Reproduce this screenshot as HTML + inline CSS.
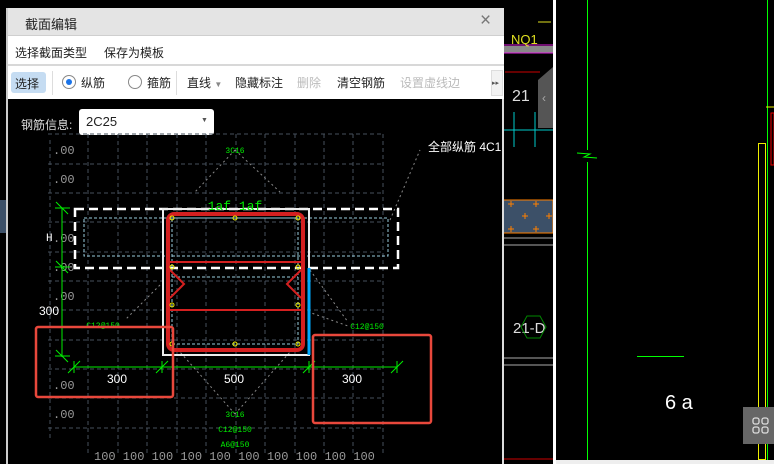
<!DOCTYPE html>
<html><head><meta charset="utf-8"><style>
*{margin:0;padding:0;box-sizing:border-box}
body{width:774px;height:464px;background:#000;position:relative;overflow:hidden;font-family:"Liberation Sans","Noto Sans CJK SC",sans-serif}
.abs{position:absolute}
.t{font-size:12px;color:#222;white-space:nowrap}
</style></head><body>
<svg class="abs" style="left:0;top:0" width="774" height="464" viewBox="0 0 774 464">
 <rect x="0" y="0" width="774" height="464" fill="#000"/>
 <line x1="503" y1="45" x2="553" y2="45" stroke="#e020e0"/>
 <rect x="503" y="46" width="50" height="7" fill="#888"/>
 <line x1="503" y1="53" x2="553" y2="53" stroke="#e020e0"/>
 <text x="511" y="44" fill="#e0e020" font-size="13" font-family="Liberation Sans">NQ1</text>
 <line x1="538" y1="22" x2="551" y2="22" stroke="#e0e020"/>
 <line x1="505" y1="72" x2="540" y2="72" stroke="#c00"/>
 <rect x="503" y="200" width="50" height="33" fill="#3c5068" stroke="#ff8000"/>
 <g stroke="#ff8000"><path d="M508 204h6M511 201v6M533 204h6M536 201v6M522 216h6M525 213v6M546 216h6M549 213v6M508 229h6M511 226v6M533 229h6M536 226v6"/></g>
 <line x1="503" y1="238" x2="553" y2="238" stroke="#aaa"/>
 <line x1="503" y1="245" x2="553" y2="245" stroke="#aaa"/>
 <line x1="503" y1="130" x2="553" y2="130" stroke="#0cc"/>
 <line x1="514" y1="112" x2="514" y2="147" stroke="#0cc"/>
 <line x1="535" y1="112" x2="535" y2="147" stroke="#0cc"/>
 <text x="512" y="101" fill="#ddd" font-size="16">21</text>
 <text x="513" y="333" fill="#ddd" font-size="15">21-D</text>
 <polygon points="527,316 540,316 546,327 540,338 527,338 521,327" fill="none" stroke="#080"/>
 <line x1="503" y1="358" x2="553" y2="358" stroke="#aaa"/>
 <line x1="503" y1="365" x2="553" y2="365" stroke="#aaa"/>
 <line x1="503" y1="459" x2="553" y2="459" stroke="#c00"/>
 <path d="M538 80 L553 67 L553 128 L538 128 Z" fill="#555"/>
 <text x="542" y="102" fill="#aaa" font-size="12">‹</text>
 <rect x="553" y="0" width="3" height="464" fill="#fff"/>
 <line x1="587.5" y1="0" x2="587.5" y2="150" stroke="#0f0"/>
 <line x1="587.5" y1="162" x2="587.5" y2="460" stroke="#0f0"/>
 <path d="M577 153 L590 154 L584 157 L597 158" stroke="#0f0" fill="none"/>
 <line x1="767.5" y1="0" x2="767.5" y2="460" stroke="#0f0"/>
 <rect x="758.5" y="143.5" width="7" height="316" fill="none" stroke="#ee0"/>
 <line x1="766" y1="107" x2="774" y2="107" stroke="#ee0"/>
 <rect x="771" y="113" width="3" height="52" fill="none" stroke="#e00"/>
 <line x1="637" y1="356.5" x2="684" y2="356.5" stroke="#0f0"/>
 <text x="665" y="409" fill="#fff" font-size="20" font-family="Liberation Sans" font-weight="100">6 a</text>
 <rect x="743" y="407" width="31" height="37" fill="#666"/>
 <g fill="none" stroke="#ddd" stroke-width="1.3"><rect x="753" y="418" width="6" height="6" rx="2"/><rect x="762" y="418" width="6" height="6" rx="2"/><rect x="753" y="427" width="6" height="6" rx="2"/><rect x="762" y="427" width="6" height="6" rx="2"/></g>
 <rect x="556" y="460" width="218" height="4" fill="#eee"/>
 <rect x="0" y="200" width="6" height="33" fill="#3c5068"/>
</svg>

<div class="abs" style="left:6px;top:8px;width:498px;height:456px;background:#000;border-left:2px solid #ccc;border-right:2px solid #ddd">
 <div class="abs" style="left:0;top:0;width:496px;height:28px;background:#e4e4e4;border-bottom:1px solid #cfcfcf"><span class="abs t" style="left:17px;top:6px;font-size:13px">截面编辑</span><span class="abs" style="left:472px;top:2px;font-size:19px;color:#777">×</span></div>
 <div class="abs" style="left:0;top:28px;width:496px;height:30px;background:#fff;border-bottom:2px solid #d8d8d8"><span class="abs t" style="left:7px;top:8px">选择截面类型</span><span class="abs t" style="left:96px;top:8px">保存为模板</span></div>
 <div class="abs" style="left:0;top:58px;width:496px;height:33px;background:#fff">
  <span class="abs t" style="left:3px;top:6px;width:35px;height:21px;background:#c5dcf2;border-radius:3px;padding:3px 0 0 4px">选择</span>
  <span class="abs" style="left:44px;top:5px;width:1px;height:24px;background:#ddd"></span>
  <span class="abs" style="left:54px;top:9px;width:14px;height:14px;border:1px solid #888;border-radius:50%"></span>
  <span class="abs" style="left:58px;top:13px;width:6px;height:6px;background:#1a73e8;border-radius:50%"></span>
  <span class="abs t" style="left:73px;top:8px">纵筋</span>
  <span class="abs" style="left:120px;top:9px;width:14px;height:14px;border:1px solid #888;border-radius:50%"></span>
  <span class="abs t" style="left:139px;top:8px">箍筋</span>
  <span class="abs" style="left:168px;top:5px;width:1px;height:24px;background:#ddd"></span>
  <span class="abs t" style="left:179px;top:8px">直线 <span style="font-size:8px;color:#888">▼</span></span>
  <span class="abs t" style="left:227px;top:8px">隐藏标注</span>
  <span class="abs t" style="left:289px;top:8px;color:#bbb">删除</span>
  <span class="abs t" style="left:329px;top:8px">清空钢筋</span>
  <span class="abs t" style="left:392px;top:8px;color:#bbb">设置虚线边</span>
  <span class="abs" style="left:483px;top:4px;width:12px;height:26px;background:#f2f2f2;border:1px solid #ddd;font-size:7px;color:#555;padding-top:8px">▸▸</span>
 </div>
 <span class="abs t" style="left:13px;top:108px;color:#ddd;font-size:12px">钢筋信息:</span>
 <div class="abs" style="left:71px;top:101px;width:135px;height:26px;background:#fff;border-radius:3px"><span class="abs t" style="left:7px;top:5px;font-size:13px">2C25</span><span class="abs" style="left:122px;top:8px;font-size:7px;color:#555">▼</span></div>
</div>

<svg class="abs" style="left:0;top:0;pointer-events:none" width="774" height="464" viewBox="0 0 774 464" font-family="Liberation Mono">
 <g stroke="#46505c" stroke-dasharray="4 3" stroke-width="1">
  <path d="M88 134V454M118 134V454M147 134V454M177 134V454M206 134V454M236 134V454M265 134V454M295 134V454M324 134V454M353 134V454M383 134V454"/>
  <path d="M48 134H383M48 164H383M48 193H383M48 222H383M48 252H383M48 281H383M48 310H383M48 340H383M48 369H383M48 398H383M48 428H383"/>
  <path d="M50 140V440"/>
 </g>
 <g fill="#999" font-size="12">
  <text x="53" y="154">.00</text><text x="53" y="183">.00</text><text x="53" y="242">.00</text><text x="53" y="271">.00</text><text x="53" y="300">.00</text><text x="53" y="389">.00</text><text x="53" y="418">.00</text>
  <text x="94" y="460">100 100 100 100 100 100 100 100 100 100</text>
 </g>
 <g stroke="#888" stroke-dasharray="2 3" fill="none"><path d="M235 150L195 192M235 150L280 192M235 414L180 352M235 414L290 352M310 270L348 322M303 310L348 326M160 285L125 320M390 220L420 150"/></g>
 <rect x="75" y="209" width="323" height="59" fill="none" stroke="#fff" stroke-width="2.5" stroke-dasharray="9 5"/>
 <rect x="84" y="218" width="304" height="38" fill="none" stroke="#9cd" stroke-dasharray="3 2"/>
 <rect x="163" y="209" width="146" height="146" fill="none" stroke="#eee" stroke-width="2"/>
 <rect x="172" y="218" width="126" height="126" fill="none" stroke="#9cd" stroke-dasharray="3 2"/>
 <line x1="172" y1="277" x2="298" y2="277" stroke="#9cd" stroke-dasharray="3 2"/>
 <rect x="168" y="214" width="135" height="136" rx="6" fill="none" stroke="#d42020" stroke-width="4"/>
 <g stroke="#d42020" stroke-width="2" fill="none"><path d="M168 262H303M168 310H303M170 270L184 284L170 298M301 270L287 284L301 298"/></g>
 <line x1="309" y1="268" x2="309" y2="355" stroke="#0af" stroke-width="3"/>
 <g fill="none" stroke="#ee0" stroke-width="1"><circle cx="172" cy="218" r="2"/><circle cx="235" cy="218" r="2"/><circle cx="298" cy="218" r="2"/><circle cx="172" cy="267" r="2"/><circle cx="298" cy="267" r="2"/><circle cx="172" cy="305" r="2"/><circle cx="298" cy="305" r="2"/><circle cx="172" cy="344" r="2"/><circle cx="235" cy="344" r="2"/><circle cx="298" cy="344" r="2"/></g>
 <g stroke="#0e0" fill="none"><path d="M62 208V357M55 208H70M55 267H70M55 356H70M56 202L68 214M56 261L68 273M56 350L68 362M74 367H397M74 361V373M162 361V373M309 361V373M397 361V373M68 373L80 361M156 373L168 361M303 373L315 361M391 373L403 361"/></g>
 <g fill="#0e0" font-size="8" text-anchor="middle"><text x="235" y="153">3C16</text><text x="235" y="417">3C16</text><text x="235" y="432">C12@150</text><text x="235" y="447">A6@150</text><text x="367" y="329">C12@150</text><text x="103" y="328">C12@150</text></g>
 <text x="235" y="210" fill="#0e0" font-size="13" text-anchor="middle">1af  1af</text>
 <g fill="#fff" font-family="Liberation Sans" font-size="12" text-anchor="middle"><text x="117" y="383">300</text><text x="234" y="383">500</text><text x="352" y="383">300</text><text x="49" y="315">300</text></g>
 <text x="46" y="241" fill="#fff" font-size="11">H</text>
 <text x="428" y="151" fill="#fff" font-size="12" font-family="Liberation Sans,Noto Sans CJK SC,sans-serif">全部纵筋  4C1</text>
 <rect x="36" y="327" width="137" height="70" fill="none" stroke="#e8483c" stroke-width="2.5" rx="2"/>
 <rect x="313" y="335" width="118" height="88" fill="none" stroke="#e8483c" stroke-width="2.5" rx="2"/>
</svg>
</body></html>
